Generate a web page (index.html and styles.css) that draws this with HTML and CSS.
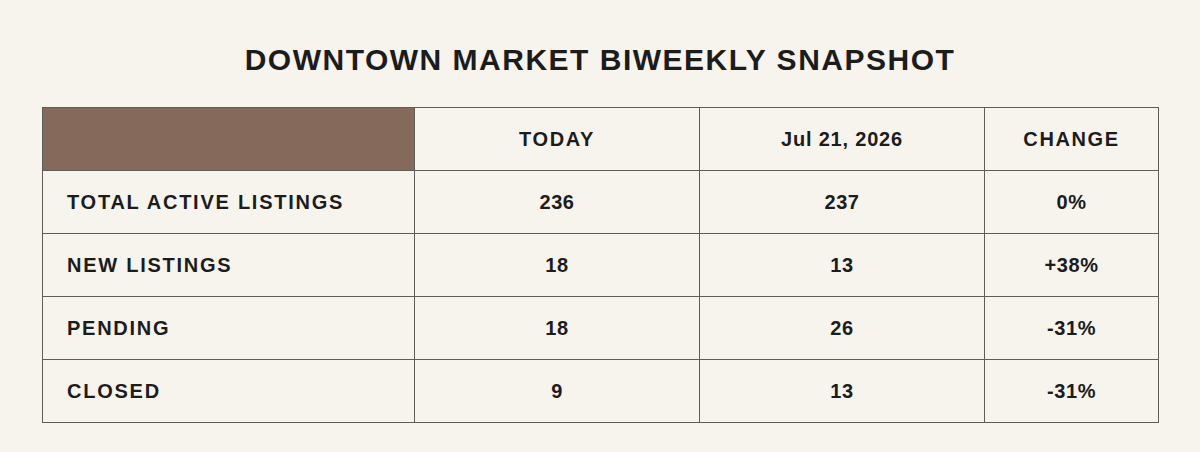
FILE: index.html
```html
<!DOCTYPE html>
<html lang="en">
<head>
<meta charset="utf-8">
<title>Downtown Market Biweekly Snapshot</title>
<link rel="stylesheet" href="styles.css">
</head>
<body>
<main class="page">
  <h1 class="title">DOWNTOWN MARKET BIWEEKLY SNAPSHOT</h1>
  <table class="snapshot">
    <colgroup>
      <col class="c-label">
      <col class="c-mid">
      <col class="c-mid">
      <col class="c-change">
    </colgroup>
    <thead>
      <tr>
        <th class="corner"></th>
        <th>TODAY</th>
        <th class="date">Jul 21, 2026</th>
        <th>CHANGE</th>
      </tr>
    </thead>
    <tbody>
      <tr><th class="label">TOTAL ACTIVE LISTINGS</th><td>236</td><td>237</td><td>0%</td></tr>
      <tr><th class="label">NEW LISTINGS</th><td>18</td><td>13</td><td>+38%</td></tr>
      <tr><th class="label">PENDING</th><td>18</td><td>26</td><td>-31%</td></tr>
      <tr><th class="label">CLOSED</th><td>9</td><td>13</td><td>-31%</td></tr>
    </tbody>
  </table>
</main>
</body>
</html>
```
FILE: styles.css
```css
html, body {
  margin: 0;
  padding: 0;
  background: #f7f4ee;
}
body {
  font-family: "Liberation Sans", Arial, sans-serif;
  color: #1c1c1c;
}
.page {
  padding: 42px 42px 0;
}
.title {
  margin: 0 0 29px;
  font-size: 30px;
  line-height: 36px;
  font-weight: 700;
  letter-spacing: 1.5px;
  text-align: center;
}
.snapshot {
  width: 1116px;
  border-collapse: collapse;
  table-layout: fixed;
}
.c-label { width: 372px; }
.c-mid { width: 285px; }
.c-change { width: 174px; }
.snapshot tr {
  height: 63px;
}
.snapshot th,
.snapshot td {
  border: 1px solid #5f5d5a;
  padding: 0;
  font-size: 20px;
  font-weight: 700;
  letter-spacing: 1.6px;
  text-align: center;
  vertical-align: middle;
}
.snapshot .date {
  letter-spacing: 0.8px;
}
.snapshot td {
  letter-spacing: 0.6px;
}
.snapshot .corner {
  background: #85695a;
}
.snapshot .label {
  text-align: left;
  padding-left: 24px;
  letter-spacing: 1.75px;
}
```
